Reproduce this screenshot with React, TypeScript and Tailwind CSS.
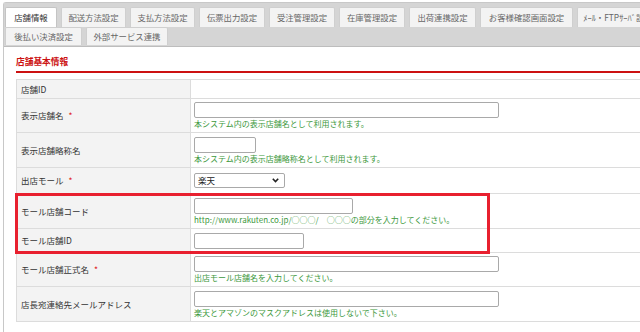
import React from "react";

const tabsRow1 = [
  { label: "店舗情報", w: "w-[52px]" },
  { label: "配送方法設定", w: "w-[65px]" },
  { label: "支払方法設定", w: "w-[65px]" },
  { label: "伝票出力設定", w: "w-[66px]" },
  { label: "受注管理設定", w: "w-[66px]" },
  { label: "在庫管理設定", w: "w-[66px]" },
  { label: "出荷連携設定", w: "w-[67px]" },
  { label: "お客様確認画面設定", w: "w-[93px]" },
  { label: "ﾒｰﾙ・FTPｻｰﾊﾞ設定", w: "w-[82px]" },
];
const tabsRow2 = [
  { label: "後払い決済設定", w: "w-[77px]" },
  { label: "外部サービス連携", w: "w-[82px]" },
];

function Tab({ label, w, active }: { label: string; w: string; active?: boolean }) {
  return (
    <div
      className={
        "h-full shrink-0 flex items-center justify-center whitespace-nowrap border border-b-0 rounded-t-[2px] text-[8.4px] " +
        w +
        " " +
        (active
          ? "bg-white border-[#c4c4c4] text-[#333]"
          : "bg-[#f3f3f3] border-[#cfcfcf] text-[#666]")
      }
    >
      {label}
    </div>
  );
}

function Row({
  h,
  label,
  required,
  children,
}: {
  h: string;
  label: string;
  required?: boolean;
  children?: React.ReactNode;
}) {
  return (
    <div className={"flex border-b border-[#dcdcdc] " + h}>
      <div className="w-[174px] shrink-0 bg-[#f3f3f3] border-r border-[#dcdcdc] flex items-center pl-[4px] text-[8.5px] text-[#333]">
        {label}
        {required && <span className="ml-[5px] text-[#e02020]">*</span>}
      </div>
      <div className="flex-1 flex flex-col justify-center items-start pl-[3px]">
        {children}
      </div>
    </div>
  );
}

function Field({ w }: { w: string }) {
  return (
    <input
      type="text"
      readOnly
      className={"h-[16px] border border-[#a9a9a9] rounded-[2px] bg-white outline-none " + w}
    />
  );
}

function Hint({ children }: { children: React.ReactNode }) {
  return (
    <div className="text-[8px] leading-[11px] text-[#3c983c] whitespace-nowrap">
      {children}
    </div>
  );
}

export default function App() {
  return (
    <div className="relative w-[640px] h-[332px] overflow-hidden bg-white font-['Noto_Sans_CJK_JP',sans-serif]">
      <div className="ml-[3px] mt-[2px] w-[720px] h-[400px] border-l border-t border-[#c8c8c8] rounded-tl-[3px]">
        {/* tabs */}
        <div className="bg-[#d5d5d5] pt-[4px] pb-[1px] pl-[1px] border-b border-[#bdbdbd]">
          <div className="flex gap-[4px] h-[20px]">
            {tabsRow1.map((t, i) => (
              <Tab key={t.label} label={t.label} w={t.w} active={i === 0} />
            ))}
          </div>
          <div className="flex gap-[4px] h-[18px]">
            {tabsRow2.map((t) => (
              <Tab key={t.label} label={t.label} w={t.w} />
            ))}
          </div>
        </div>

        {/* content */}
        <div className="pl-[12px]">
          <div className="mt-[9px] h-[17px] border-b-2 border-[#cc1111] text-[8.7px] leading-[12px] font-bold text-[#cc1111]">
            店舗基本情報
          </div>
          <div className="mt-[6px] border-t border-l border-[#dcdcdc]">
            <Row h="h-[19px]" label="店舗ID" />
            <Row h="h-[34px]" label="表示店舗名" required>
              <Field w="w-[305px]" />
              <Hint>本システム内の表示店舗名として利用されます。</Hint>
            </Row>
            <Row h="h-[35px]" label="表示店舗略称名">
              <Field w="w-[62px]" />
              <Hint>本システム内の表示店舗略称名として利用されます。</Hint>
            </Row>
            <Row h="h-[26px]" label="出店モール" required>
              <div className="w-[91px] h-[15px] border border-[#a9a9a9] rounded-[2px] bg-white flex items-center justify-between pl-[3px] pr-[5px] text-[8.5px] text-[#222]">
                <span>楽天</span>
                <svg width="7" height="5" viewBox="0 0 7 5">
                  <path d="M0.8 0.8 L3.5 3.6 L6.2 0.8" fill="none" stroke="#222" strokeWidth="1.6" />
                </svg>
              </div>
            </Row>
            <Row h="h-[35px]" label="モール店舗コード">
              <Field w="w-[159px]" />
              <Hint>http://www.rakuten.co.jp/○○○/　○○○の部分を入力してください。</Hint>
            </Row>
            <Row h="h-[24px]" label="モール店舗ID">
              <Field w="w-[110px]" />
            </Row>
            <Row h="h-[34px]" label="モール店舗正式名" required>
              <Field w="w-[305px]" />
              <Hint>出店モール店舗名を入力してください。</Hint>
            </Row>
            <Row h="h-[35px]" label="店長宛連絡先メールアドレス">
              <Field w="w-[305px]" />
              <Hint>楽天とアマゾンのマスクアドレスは使用しないで下さい。</Hint>
            </Row>
          </div>
        </div>
      </div>

      {/* annotation box */}
      <div className="absolute left-[15px] top-[193px] w-[475px] h-[61px] border-[3px] border-[#e8202f]" />
    </div>
  );
}
